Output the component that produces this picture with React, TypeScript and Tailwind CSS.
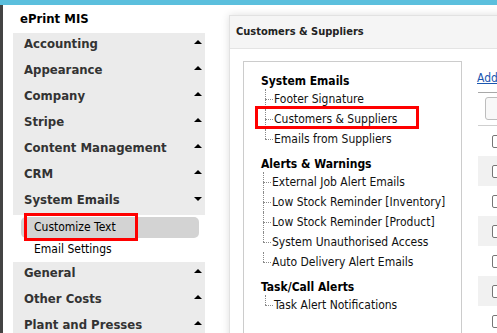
import React from "react";

const font = { fontFamily: '"DejaVu Sans Condensed", "DejaVu Sans", Verdana, sans-serif', fontStretch: "condensed" as const };

const topMenu = ["Accounting", "Appearance", "Company", "Stripe", "Content Management", "CRM"];
const bottomMenu = ["General", "Other Costs", "Plant and Presses"];

function Arrow({ down }: { down?: boolean }) {
  return down ? (
    <span className="mt-[8px] w-0 h-0 border-x-[4px] border-x-transparent border-t-[4px] border-t-black" />
  ) : (
    <span className="mt-[7px] w-0 h-0 border-x-[4px] border-x-transparent border-b-[4px] border-b-black" />
  );
}

function MenuItem({ label, down }: { label: string; down?: boolean }) {
  return (
    <div className="h-[26px] flex justify-between items-start pl-[11px] pr-[3px]">
      <span className="font-bold text-[13px] leading-[22px] text-[#333]">{label}</span>
      <Arrow down={down} />
    </div>
  );
}

type Group = { title: string; items: string[]; line: number; text: number; split?: number };

const groups: Group[] = [
  { title: "System Emails", items: ["Footer Signature", "Customers & Suppliers", "Emails from Suppliers"], line: 4, text: 13 },
  {
    title: "Alerts & Warnings",
    items: [
      "External Job Alert Emails",
      "Low Stock Reminder [Inventory]",
      "Low Stock Reminder [Product]",
      "System Unauthorised Access",
      "Auto Delivery Alert Emails",
    ],
    line: 2,
    text: 11,
    split: 4,
  },
  { title: "Task/Call Alerts", items: ["Task Alert Notifications"], line: 4, text: 13 },
];

function TreeRow({ label, last, line, text, selected }: { label: string; last: boolean; line: number; text: number; selected?: boolean }) {
  return (
    <div className="relative h-[20px] flex items-start">
      <div className="relative self-stretch shrink-0" style={{ width: text }}>
        <div
          className={`absolute top-0 border-l border-dotted border-[#8a8a8a] ${last ? "h-[10px]" : "h-[20px]"}`}
          style={{ left: line }}
        />
        <div className="absolute top-[10px] right-[1px] border-t border-dotted border-[#8a8a8a]" style={{ left: line }} />
      </div>
      <span className="text-[12px] leading-[20px] text-[#111] whitespace-nowrap">{label}</span>
      {selected && (
        <div className="absolute left-[-6px] top-[-3px] w-[164px] h-[23px] border-[3px] border-[#ff0000]" />
      )}
    </div>
  );
}

export default function App() {
  return (
    <div className="w-[497px] h-[333px] overflow-hidden bg-white flex flex-col" style={font}>
      <div className="h-[5px] shrink-0 bg-[#5bbfdd]" />
      <div className="flex flex-1 min-h-0">
        <div className="w-[3px] shrink-0 bg-[#444]" />

        <aside className="w-[226px] shrink-0">
          <div className="h-[28px] pl-[17px] pt-[6px] font-bold text-[13px] leading-[16px] text-black">ePrint MIS</div>
          <div className="ml-[10px] w-[192px]">
            <div className="bg-[#ebebeb]">
              {topMenu.map((m) => (
                <MenuItem key={m} label={m} />
              ))}
              <MenuItem label="System Emails" down />
            </div>
            <div className="relative mt-[2px] ml-[8px] w-[178px] h-[21px] rounded-[5px] bg-[#d3d3d3] pl-[13px] text-[12px] leading-[21px] text-black">
              Customize Text
              <div className="absolute left-[3px] top-[-4px] w-[114px] h-[28px] border-[3px] border-[#ff0000]" />
            </div>
            <div className="mt-[1px] h-[20px] pl-[21px] text-[12px] leading-[20px] text-black">Email Settings</div>
            <div className="mt-[3px] bg-[#ebebeb]">
              {bottomMenu.map((m) => (
                <MenuItem key={m} label={m} />
              ))}
            </div>
          </div>
        </aside>

        <main className="flex-1 min-w-0 pt-[10px]">
          <div className="w-[420px] border border-[#e2e2e2] shadow-[0_0_8px_rgba(0,0,0,0.13)] bg-white">
            <div className="h-[33px] bg-[#f5f5f5] border-b border-[#e4e4e4] pl-[6px] font-bold text-[11px] leading-[32px] text-[#222]">
              Customers &amp; Suppliers
            </div>
            <div className="flex pl-[13px] pt-[12px]">
              <div className="w-[219px] shrink-0 border border-[#cccccc] pl-[17px] pt-[11px] pb-[40px]">
                {groups.map((g, gi) => (
                  <div key={g.title} className={gi > 0 ? "mt-[7px]" : ""}>
                    <div className="h-[16px] font-bold text-[12px] leading-[16px] text-black">{g.title}</div>
                    {g.items.map((it, i) => (
                      <TreeRow
                        key={it}
                        label={it}
                        last={i === g.items.length - 1 || (g.split !== undefined && i === g.split - 1)}
                        line={g.line}
                        text={g.text}
                        selected={it === "Customers & Suppliers"}
                      />
                    ))}
                  </div>
                ))}
              </div>

              <div className="ml-[15px] pt-[9px] w-[200px] shrink-0">
                <a className="block text-[12px] leading-[16px] text-[#1a56b0] underline">Add</a>
                <div className="mt-[6px] ml-[1px] border-t border-[#a8a8a8]">
                  <div className="h-[33px] border-b border-[#cfcfcf] pl-[7px] pt-[4px]">
                    <div className="w-[40px] h-[23px] rounded-[3px] border border-[#bdbdbd] bg-[#f8f8f8]" />
                  </div>
                  {[0, 1, 2, 3, 4, 5, 6].map((r) => (
                    <div
                      key={r}
                      className={`h-[30px] flex items-center pl-[14px] ${r % 2 === 1 ? "bg-[#f1f1f1]" : "bg-white"}`}
                    >
                      <div className="w-[13px] h-[13px] rounded-[2px] border border-[#767676] bg-white" />
                    </div>
                  ))}
                </div>
              </div>
            </div>
          </div>
        </main>
      </div>
    </div>
  );
}
